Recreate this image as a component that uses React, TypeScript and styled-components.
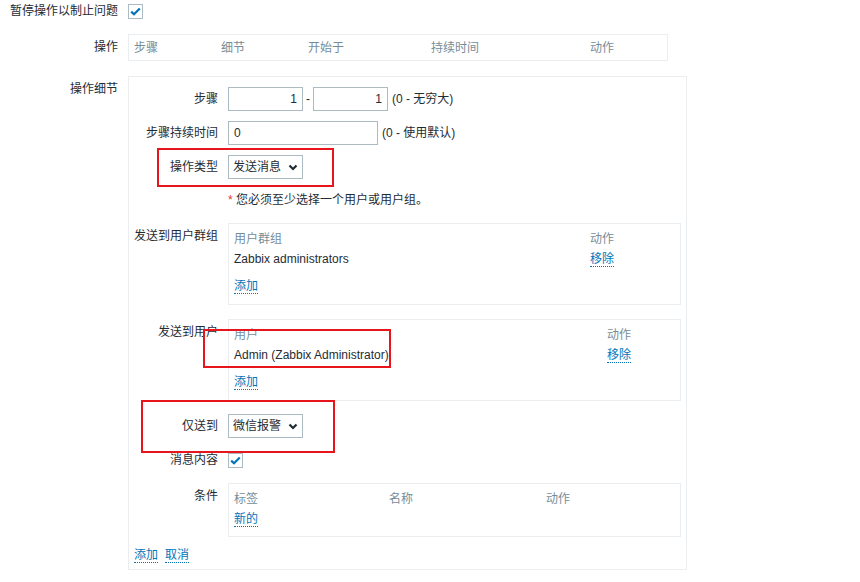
import React from "react";
import styled, { createGlobalStyle } from "styled-components";

const C = {
  text: "#1f2c33",
  muted: "#768d99",
  link: "#0275b8",
  border: "#ebeef0",
  input: "#acbbc2",
  red: "#e8161c",
  err: "#e33734",
};

const GlobalStyle = createGlobalStyle`
  html, body { margin: 0; padding: 0; background: #fff; }
  body {
    font-family: "Liberation Sans", Arial, "Noto Sans CJK SC", sans-serif;
    font-size: 12px;
    color: ${C.text};
  }
`;

const Page = styled.div`
  position: relative;
  width: 860px;
  height: 582px;
  overflow: hidden;
  padding-top: 4px;
  box-sizing: border-box;
`;

const Form = styled.div`
  display: flex;
  flex-direction: column;
  gap: 15px;
`;

const Row = styled.div<{ $center?: boolean }>`
  display: grid;
  grid-template-columns: 118px 1fr;
  column-gap: 10px;
  align-items: ${(p) => (p.$center ? "center" : "start")};
`;

const Label = styled.div<{ $pt?: number; $lh?: number }>`
  text-align: right;
  white-space: nowrap;
  line-height: ${(p) => p.$lh ?? 14}px;
  padding-top: ${(p) => p.$pt ?? 0}px;
`;

const CheckBox = styled.span`
  display: inline-flex;
  align-items: center;
  justify-content: center;
  width: 15px;
  height: 15px;
  box-sizing: border-box;
  border: 1px solid ${C.input};
  background: #fff;
`;

const Box = styled.div<{ $w: number }>`
  width: ${(p) => p.$w}px;
  box-sizing: border-box;
  border: 1px solid ${C.border};
`;

const OpsHeader = styled.div`
  display: grid;
  grid-template-columns: 87px 87px 123px 159px 1fr;
  padding: 6px 5px 5px;
  line-height: 14px;
  color: ${C.muted};
`;

const Details = styled(Box)`
  padding: 10px 0 6px 5px;
`;

const DRow = styled.div<{ $mt?: number; $center?: boolean }>`
  display: grid;
  grid-template-columns: 84px 1fr;
  column-gap: 10px;
  margin-top: ${(p) => p.$mt ?? 0}px;
  align-items: ${(p) => (p.$center ? "center" : "start")};
`;

const Inline = styled.div`
  display: flex;
  align-items: center;
  line-height: 24px;
  white-space: nowrap;
`;

const TextInput = styled.div<{ $w: number; $right?: boolean }>`
  width: ${(p) => p.$w}px;
  height: 24px;
  box-sizing: border-box;
  border: 1px solid ${C.input};
  padding: 0 5px;
  line-height: 22px;
  text-align: ${(p) => (p.$right ? "right" : "left")};
  background: #fff;
`;

const Dash = styled.span`
  width: 10px;
  text-align: center;
`;

const Hint = styled.span`
  margin-left: 4px;
`;

const Select = styled.div`
  width: 75px;
  height: 24px;
  box-sizing: border-box;
  border: 1px solid ${C.input};
  padding: 0 4px 0 4px;
  display: flex;
  align-items: center;
  justify-content: space-between;
  line-height: 22px;
  background: #fff;
`;

const ErrorText = styled.div`
  line-height: 14px;
  white-space: nowrap;
`;

const Star = styled.span`
  color: ${C.err};
`;

const Table = styled(Box)<{ $pb?: number }>`
  padding: 3px 5px ${(p) => p.$pb ?? 3}px;
`;

const TRow = styled.div<{ $cols: string; $h: number; $head?: boolean }>`
  display: grid;
  grid-template-columns: ${(p) => p.$cols};
  height: ${(p) => p.$h}px;
  align-items: center;
  color: ${(p) => (p.$head ? C.muted : C.text)};
  white-space: nowrap;
`;

const Link = styled.a`
  color: ${C.link};
  text-decoration: none;
  border-bottom: 1px dotted ${C.link};
  line-height: 14px;
  cursor: pointer;
  justify-self: start;
`;

const Footer = styled.div`
  display: flex;
  gap: 7px;
  margin-top: 11px;
  line-height: 14px;
`;

const Mark = styled.div<{ $x: number; $y: number; $w: number; $h: number }>`
  position: absolute;
  left: ${(p) => p.$x}px;
  top: ${(p) => p.$y}px;
  width: ${(p) => p.$w}px;
  height: ${(p) => p.$h}px;
  box-sizing: border-box;
  border: 2px solid ${C.red};
  pointer-events: none;
`;

const Check = () => (
  <CheckBox>
    <svg width="11" height="9" viewBox="0 0 11 9">
      <polyline points="1.2,4.6 4,7.3 9.8,1.5" fill="none" stroke={C.link} strokeWidth="2.2" />
    </svg>
  </CheckBox>
);

const Chevron = () => (
  <svg width="10" height="7" viewBox="0 0 10 7">
    <polyline points="1.5,1.5 5,5 8.5,1.5" fill="none" stroke={C.text} strokeWidth="2.2" />
  </svg>
);

const ListBox = ({
  head,
  rows,
  cols,
  w,
  pb,
  addText,
}: {
  head: string[];
  rows: { cells: string[]; action?: string }[];
  cols: string;
  w: number;
  pb?: number;
  addText: string;
}) => (
  <Table $w={w} $pb={pb}>
    <TRow $cols={cols} $h={20} $head>
      {head.map((h) => (
        <span key={h}>{h}</span>
      ))}
    </TRow>
    {rows.map((r, i) => (
      <TRow key={i} $cols={cols} $h={24}>
        {r.cells.map((c) => (
          <span key={c}>{c}</span>
        ))}
        {r.action && <Link>{r.action}</Link>}
      </TRow>
    ))}
    <TRow $cols={cols} $h={30}>
      <Link>{addText}</Link>
    </TRow>
  </Table>
);

export default function App() {
  return (
    <>
      <GlobalStyle />
      <Page>
        <Form>
          <Row $center>
            <Label $lh={15}>暂停操作以制止问题</Label>
            <div style={{ display: "flex" }}>
              <Check />
            </div>
          </Row>
          <Row>
            <Label $pt={6}>操作</Label>
            <Box $w={540}>
              <OpsHeader>
                <span>步骤</span>
                <span>细节</span>
                <span>开始于</span>
                <span>持续时间</span>
                <span>动作</span>
              </OpsHeader>
            </Box>
          </Row>
          <Row>
            <Label $pt={6}>操作细节</Label>
            <Details $w={559}>
              <DRow $center>
                <Label $lh={24}>步骤</Label>
                <Inline>
                  <TextInput $w={75} $right>1</TextInput>
                  <Dash>-</Dash>
                  <TextInput $w={75} $right>1</TextInput>
                  <Hint>(0 - 无穷大)</Hint>
                </Inline>
              </DRow>
              <DRow $mt={10} $center>
                <Label $lh={24}>步骤持续时间</Label>
                <Inline>
                  <TextInput $w={150}>0</TextInput>
                  <Hint>(0 - 使用默认)</Hint>
                </Inline>
              </DRow>
              <DRow $mt={10} $center>
                <Label $lh={24}>操作类型</Label>
                <Inline>
                  <Select>
                    <span>发送消息</span>
                    <Chevron />
                  </Select>
                </Inline>
              </DRow>
              <DRow $mt={14}>
                <span />
                <ErrorText>
                  <Star>*</Star> 您必须至少选择一个用户或用户组。
                </ErrorText>
              </DRow>
              <DRow $mt={16}>
                <Label $pt={6}>发送到用户群组</Label>
                <ListBox
                  w={453}
                  cols="356px 1fr"
                  head={["用户群组", "动作"]}
                  rows={[{ cells: ["Zabbix administrators"], action: "移除" }]}
                  addText="添加"
                />
              </DRow>
              <DRow $mt={14}>
                <Label $pt={6}>发送到用户</Label>
                <ListBox
                  w={453}
                  cols="373px 1fr"
                  head={["用户", "动作"]}
                  rows={[{ cells: ["Admin (Zabbix Administrator)"], action: "移除" }]}
                  addText="添加"
                />
              </DRow>
              <DRow $mt={13} $center>
                <Label $lh={24}>仅送到</Label>
                <Inline>
                  <Select>
                    <span>微信报警</span>
                    <Chevron />
                  </Select>
                </Inline>
              </DRow>
              <DRow $mt={15} $center>
                <Label $lh={15}>消息内容</Label>
                <div style={{ display: "flex" }}>
                  <Check />
                </div>
              </DRow>
              <DRow $mt={15}>
                <Label $pt={6}>条件</Label>
                <Table $w={453} $pb={5}>
                  <TRow $cols="155px 157px 1fr" $h={20} $head>
                    <span>标签</span>
                    <span>名称</span>
                    <span>动作</span>
                  </TRow>
                  <TRow $cols="155px 157px 1fr" $h={24}>
                    <Link>新的</Link>
                  </TRow>
                </Table>
              </DRow>
              <Footer>
                <Link>添加</Link>
                <Link>取消</Link>
              </Footer>
            </Details>
          </Row>
        </Form>
        <Mark $x={157} $y={148} $w={177} $h={39} />
        <Mark $x={203} $y={329} $w={188} $h={39} />
        <Mark $x={141} $y={400} $w={194} $h={53} />
      </Page>
    </>
  );
}
